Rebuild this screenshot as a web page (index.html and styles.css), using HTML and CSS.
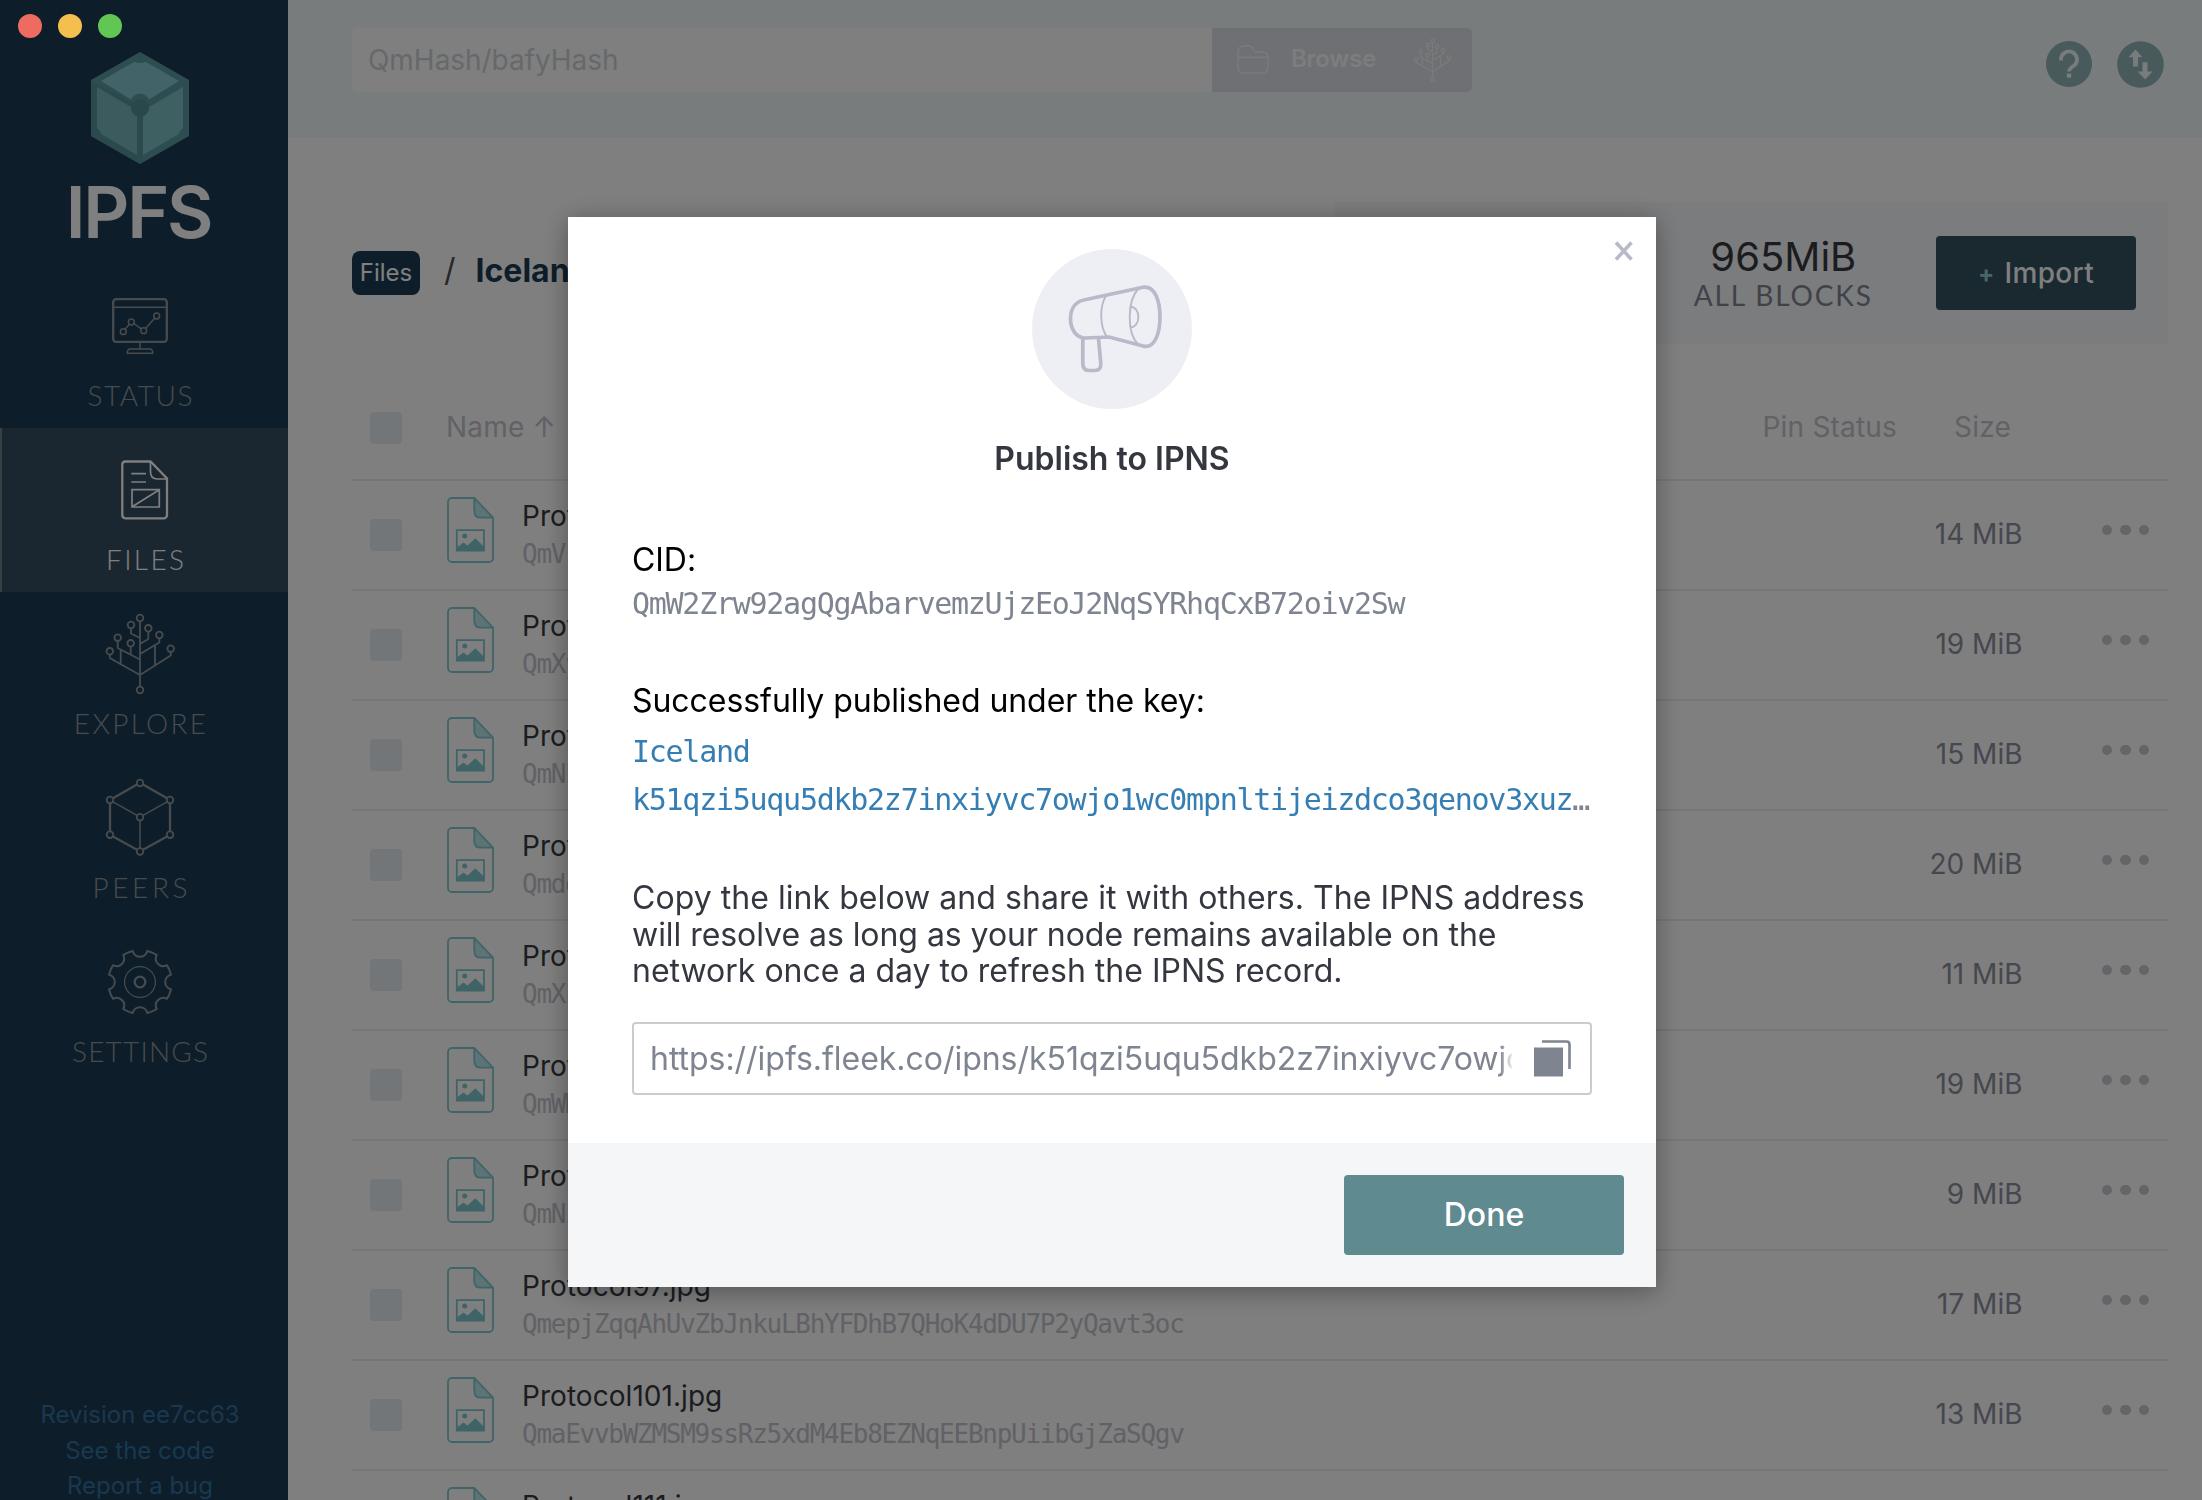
FILE: index.html
```html
<!DOCTYPE html>
<html lang="en">
<head>
<meta charset="utf-8">
<title>IPFS Files</title>
<link rel="stylesheet" href="styles.css">
</head>
<body>
<svg class="defs" width="0" height="0">
  <symbol id="tree" viewBox="0 0 68 80" overflow="visible">
    <path d="M34 7.5V72.5M25 14.5v5L34 24M42.3 17.5V25L34 30M53.3 24.500v4L34 40M64.700 38v3.500L34 61M11.700 27v7L34 45.500M24.700 32.600V41M3.800 40.600V44L34 61M14.700 36v15M49 31.500V51"/>
    <circle cx="34" cy="4" r="3.300"/><circle cx="25" cy="11" r="3.300"/><circle cx="42.300" cy="14.300" r="3.300"/><circle cx="53.300" cy="21" r="3.300"/><circle cx="64.700" cy="34.700" r="3.300"/><circle cx="11.700" cy="23.700" r="3.300"/><circle cx="24.700" cy="29.300" r="3.300"/><circle cx="3.800" cy="37.300" r="3.300"/><circle cx="34" cy="76" r="3.300"/>
  </symbol>
  <symbol id="doc" viewBox="0 0 47 66">
    <path d="M27.300 1l18.700 19.700h-12q-6.700 0-6.700-7z" fill="#bce6ec"/>
    <path d="M5 1H27.500L46 20.700V61a4 4 0 0 1-4 4H5a4 4 0 0 1-4-4V5a4 4 0 0 1 4-4zM27.300 1v12.700q0 7 6.700 7H46" fill="none" stroke="#7ecad0" stroke-width="1.800" stroke-linejoin="round"/>
    <path d="M9.800 33.200H37V53.500H9.800z" fill="none" stroke="#7ec8d0" stroke-width="1.800"/>
    <path d="M10 50.500l6.500-5 4 3 7.800-7.300 9 8.800v4H10z" fill="#7ec8d0"/><circle cx="17.700" cy="39" r="2.500" fill="#7ec8d0"/>
  </symbol>
</svg>

<div class="app">
  <nav class="sidebar">
    <div class="brand">
      <svg width="98" height="112" viewBox="0 0 98 112">
        <path d="M49 0l49 28v56l-49 28L0 84V28z" fill="#5a9aa0"/>
        <path d="M0 28l49 28 9 5-6 10v38l-3 3L0 84z" fill="#55929a" opacity=".6"/>
        <path d="M10 29L43 10q6 2 12 0l33 19-30 18.500a10 10 0 0 0-18 0z" fill="#84c8d0"/>
        <path d="M6 35l34 20a10 10 0 0 0 6 9v39L10 82q-1-4-4-6z" fill="#78b6bc"/>
        <path d="M92 35L58 55a10 10 0 0 1-6 9v39l36-21q1-4 4-6z" fill="#7cc0c4"/>
        <circle cx="49" cy="56" r="9" fill="#549096"/>
      </svg>
      <div class="wordmark">IPFS</div>
    </div>
    <a class="nav">
      <svg width="56" height="56" viewBox="0 0 56 56" stroke-width="1.500">
        <rect x="1.200" y="1.200" width="53.600" height="42.600" rx="3" stroke-width="2.300"/>
        <path d="M2 9.300H54M13 31.200l4.500-5M21.800 25.500l7.500 5.300M33.700 30.300l9-10M28 44v7M15.300 55.300q-.3-4.300 3.200-4.300h19q3.500 0 3.200 4.300z"/>
        <circle cx="11.300" cy="33.700" r="2.900"/><circle cx="19.300" cy="24" r="2.900"/><circle cx="31.700" cy="32.700" r="2.900"/><circle cx="44.700" cy="18" r="2.900"/>
      </svg>
      <span class="ls-status">STATUS</span>
    </a>
    <a class="nav active">
      <svg width="48" height="60" viewBox="0 0 48 60" stroke-width="1.700">
        <path d="M4.500 1.500H29.500L46 18.500V55a3.300 3.300 0 0 1-3.300 3.300H4.500A3.300 3.300 0 0 1 1.300 55V4.800A3.300 3.300 0 0 1 4.500 1.500z" stroke-width="2.300"/>
        <path d="M29.500 2v10q0 7 7 7H46M10.300 13.700H25M10.300 22H25M11 29.700H38.300V47H11zM11.500 46.500l26.500-16.500"/>
      </svg>
      <span class="ls-files">FILES</span>
    </a>
    <a class="nav">
      <svg width="68" height="80" stroke-width="1.800"><use href="#tree"/></svg>
      <span class="ls-explore">EXPLORE</span>
    </a>
    <a class="nav">
      <svg width="68" height="78" viewBox="0 0 68 78" stroke-width="1.500">
        <path d="M31 5.500L7 19.300M37 5.500L61 19.300M4 24.500v27.700M64 24.500v27.700M7 57.500L31 70.800M61 57.500L37 70.800" stroke-width="2.300"/>
        <path d="M7 22.800L31 36.400M61 22.800L37 36.400M34 41.500V69"/>
        <g stroke-width="1.800"><circle cx="34" cy="4" r="3.300"/><circle cx="64" cy="21" r="3.300"/><circle cx="64" cy="55.700" r="3.300"/><circle cx="34" cy="72.500" r="3.300"/><circle cx="4" cy="55.700" r="3.300"/><circle cx="4" cy="21" r="3.300"/><circle cx="34" cy="38.200" r="3.300"/></g>
      </svg>
      <span class="ls-peers">PEERS</span>
    </a>
    <a class="nav">
      <svg width="66" height="66" viewBox="-33 -33 66 66" stroke-width="2" stroke-linejoin="round">
        <path d="M7.300-31A31.800 31.800 0 0 1 16.800-27A7.500 7.500 0 0 0 27-16.800A31.800 31.800 0 0 1 31-7.300A7.500 7.500 0 0 0 31 7.300A31.800 31.800 0 0 1 27 16.800A7.500 7.500 0 0 0 16.800 27A31.800 31.800 0 0 1 7.300 31A7.500 7.500 0 0 0-7.300 31A31.800 31.800 0 0 1-16.800 27A7.500 7.500 0 0 0-27 16.800A31.800 31.800 0 0 1-31 7.300A7.500 7.500 0 0 0-31-7.300A31.800 31.800 0 0 1-27-16.800A7.500 7.500 0 0 0-16.800-27A31.800 31.800 0 0 1-7.300-31A7.500 7.500 0 0 0 7.300-31z"/>
        <circle r="15.400" stroke-width="1.200"/><circle r="5.300" stroke-width="2.300"/>
      </svg>
      <span class="ls-settings">SETTINGS</span>
    </a>
    <div class="about"><div>Revision ee7cc63</div><div>See the code</div><div>Report a bug</div></div>
  </nav>

  <div class="main">
    <header class="topbar">
      <div class="search"><div class="search-input">QmHash/bafyHash</div>
        <div class="browse">
          <svg width="33" height="30" viewBox="0 0 33 30" fill="none" stroke="#fff" opacity=".7" stroke-width="1.400"><path d="M1 7q0-6 6-6h5q2.500 0 4 3t3 3h6q6 0 6 5.500V22q0 6-6 6H7q-6 0-6-6zM1 12.300H31"/></svg>
          <b>Browse</b>
          <svg class="browse-tree" width="37" height="43" fill="none" stroke="#fff" opacity=".7" stroke-width="2.200"><use href="#tree"/></svg>
        </div>
      </div>
      <div class="tools">
        <svg width="46" height="46" viewBox="-23 -23 46 46"><circle r="23" fill="#90b4b8"/><path d="M-8-3.500v-1A8 8 0 1 1 6 .8Q0 4.500 0 7.500" fill="none" stroke="#f0f8fa" stroke-width="3.800"/><path d="M-2.200 9.500h4.400v4.200h-4.400z" fill="#f0f8fa"/></svg>
        <svg width="47" height="47" viewBox="-23.500 -23.500 47 47"><circle r="23.300" fill="#90b4b8"/><path d="M-5-15l7 7.700h-4.500V2h-5V-7.300H-12zM4.700 15l-7.700-8h5V-2.300h5V7h5z" fill="#f0f8fa"/></svg>
      </div>
    </header>

    <div class="content">
      <div class="heading">
        <div class="crumbs"><span class="chip">Files</span><span class="slash">/</span><b>Iceland</b></div>
        <div class="stats">
          <div class="stat"><div class="value">965MiB</div><div class="label">ALL BLOCKS</div></div>
          <div class="import"><i>+</i><span>Import</span></div>
        </div>
      </div>
      <div class="thead"><span class="check"></span><span class="col-name">Name <i>↑</i></span><span class="col-pin">Pin Status</span><span class="col-size">Size</span></div>
      <div class="row"><span class="check"></span><svg class="doc"><use href="#doc"/></svg><div class="file"><div>Protocol12.jpg</div><code>QmVr</code></div><span class="size">14 MiB</span><span class="dots"><i></i><i></i><i></i></span></div>
      <div class="row"><span class="check"></span><svg class="doc"><use href="#doc"/></svg><div class="file"><div>Protocol24.jpg</div><code>QmXy</code></div><span class="size">19 MiB</span><span class="dots"><i></i><i></i><i></i></span></div>
      <div class="row"><span class="check"></span><svg class="doc"><use href="#doc"/></svg><div class="file"><div>Protocol33.jpg</div><code>QmNL</code></div><span class="size">15 MiB</span><span class="dots"><i></i><i></i><i></i></span></div>
      <div class="row"><span class="check"></span><svg class="doc"><use href="#doc"/></svg><div class="file"><div>Protocol41.jpg</div><code>Qmdd</code></div><span class="size">20 MiB</span><span class="dots"><i></i><i></i><i></i></span></div>
      <div class="row"><span class="check"></span><svg class="doc"><use href="#doc"/></svg><div class="file"><div>Protocol58.jpg</div><code>QmXL</code></div><span class="size">11 MiB</span><span class="dots"><i></i><i></i><i></i></span></div>
      <div class="row"><span class="check"></span><svg class="doc"><use href="#doc"/></svg><div class="file"><div>Protocol67.jpg</div><code>QmWM</code></div><span class="size">19 MiB</span><span class="dots"><i></i><i></i><i></i></span></div>
      <div class="row"><span class="check"></span><svg class="doc"><use href="#doc"/></svg><div class="file"><div>Protocol85.jpg</div><code>QmNz</code></div><span class="size">9 MiB</span><span class="dots"><i></i><i></i><i></i></span></div>
      <div class="row"><span class="check"></span><svg class="doc"><use href="#doc"/></svg><div class="file"><div>Protocol97.jpg</div><code>QmepjZqqAhUvZbJnkuLBhYFDhB7QHoK4dDU7P2yQavt3oc</code></div><span class="size">17 MiB</span><span class="dots"><i></i><i></i><i></i></span></div>
      <div class="row"><span class="check"></span><svg class="doc"><use href="#doc"/></svg><div class="file"><div>Protocol101.jpg</div><code>QmaEvvbWZMSM9ssRz5xdM4Eb8EZNqEEBnpUiibGjZaSQgv</code></div><span class="size">13 MiB</span><span class="dots"><i></i><i></i><i></i></span></div>
      <div class="row"><span class="check"></span><svg class="doc"><use href="#doc"/></svg><div class="file"><div>Protocol111.jpg</div></div></div>
    </div>
  </div>
</div>

<div class="overlay">
  <div class="modal">
    <svg class="close" width="20" height="20" viewBox="0 0 20 20"><path d="M2 1.500l15.500 17M17.500 1.500L2 18.500" stroke="#b7bbc8" stroke-width="3.600"/></svg>
    <div class="modal-body">
      <svg class="badge" width="160" height="160" viewBox="0 0 160 160" fill="none" stroke="#b9bac9">
        <circle cx="80" cy="80" r="80" fill="#eeeff4" stroke="none"/>
        <path d="M54 50.500L111 38.200C123 36.500 128 52 128 68C128 84 123 99 112 97.300L77 88L53 89C44 89 38.500 80 38.500 69.500C38.500 59 44 52 54 50.500z" stroke-width="3.700"/>
        <path d="M50.800 89V114q0 7.500 6 7.500h6q6.500 0 6-7L66.400 88.500" stroke-width="3.700"/>
        <path d="M73.800 47C67.500 58 67.500 77 75 88M106.500 39.500C95 52 94.500 84 106.500 96M98.500 57.700C109 58 109 78 98.500 78.300" stroke-width="1.900"/>
      </svg>
      <h2>Publish to IPNS</h2>
      <div class="black">CID:</div>
      <code class="cid">QmW2Zrw92agQgAbarvemzUjzEoJ2NqSYRhqCxB72oiv2Sw</code>
      <div class="black published">Successfully published under the key:</div>
      <code class="key">Iceland</code>
      <code class="key"><span>k51qzi5uqu5dkb2z7inxiyvc7owjo1wc0mpnltijeizdco3qenov3xuz</span><em>…</em></code>
      <p>Copy the link below and share it with others. The IPNS address<br><span class="tight">will resolve as long as your node remains available on the</span><br><span class="snug">network once a day to refresh the IPNS record.</span></p>
      <div class="link"><div class="url">https://ipfs.fleek.co/ipns/k51qzi5uqu5dkb2z7inxiyvc7owjo1wc0mpnltijeizdco3qenov3xuz</div>
        <svg width="37" height="37" viewBox="0 0 37 37"><path d="M0 7.500H29V36.500H0z" fill="#7f8491"/><path d="M8 1.500H32.500Q35.500 1.500 35.500 4.500V29" fill="none" stroke="#7f8491" stroke-width="2.600"/></svg>
      </div>
    </div>
    <div class="modal-foot"><div class="done">Done</div></div>
  </div>
</div>
<div class="lights"><i class="red"></i><i class="yellow"></i><i class="green"></i></div>
</body>
</html>
```

FILE: styles.css
```css
* { box-sizing: border-box; }
html, body { margin: 0; height: 100%; overflow: hidden; }
body { font-family: Inter, sans-serif; color: #36393e; background: #fff; }
i, em { font-style: normal; }
svg { display: block; flex: none; }
.defs { position: absolute; }
code { font-family: "DejaVu Sans Mono", monospace; }

.app { display: flex; height: 1500px; overflow: hidden; }

/* sidebar */
.sidebar { flex: none; width: 288px; height: 1500px; background: #1a3c54; display: flex; flex-direction: column; overflow: hidden; }
.brand { flex: none; height: 264px; padding: 52px 8px 0 0; display: flex; flex-direction: column; align-items: center; }
.wordmark { font-size: 71.5px; font-weight: 600; line-height: 80px; letter-spacing: -2.2px; margin: 8px 3px 0 0; color: #fff; }
.nav { flex: none; height: 164px; padding: 6px 8px 16px 0; display: flex; flex-direction: column; align-items: center; color: #8e979c; }
.nav svg { fill: none; stroke: #8e979c; margin: auto 0; overflow: visible; position: relative; top: 2px; }
.nav span { font-family: Lato, sans-serif; font-weight: 300; font-size: 28px; line-height: 34px; }
.nav.active { background: #344e60; border-left: 2px solid #728088; padding-right: 0; color: #fff; }
.nav.active svg { stroke: #fff; }
.nav .ls-status { letter-spacing: 1.56px; margin-right: -1.56px; }
.nav .ls-files { letter-spacing: 2.37px; margin-right: -2.37px; }
.nav .ls-explore { letter-spacing: 2.34px; margin-right: -2.34px; }
.nav .ls-peers { letter-spacing: 3.59px; margin-right: -3.59px; }
.nav .ls-settings { letter-spacing: 1.19px; margin-right: -1.19px; }
.about { margin-top: 313px; padding-right: 8px; text-align: center; font-size: 24px; line-height: 35.6px; color: #32709f; }

/* top bar */
.main { flex: 1; min-width: 0; }
.topbar { height: 138px; background: #f0f8fa; padding: 28px 38px 0 64px; display: flex; justify-content: space-between; }
.search { display: flex; height: 64px; width: 1120px; border-radius: 5px; overflow: hidden; }
.search-input { flex: 1; background: #fff; padding-left: 16px; font-size: 28px; line-height: 64px; letter-spacing: -.04px; color: #ccd2d8; }
.browse { width: 260px; background: #dfe0e7; display: flex; align-items: center; padding: 0 21px 0 25px; color: #f9fcfc; font-size: 24px; line-height: 62px; }
.browse b { font-weight: 600; letter-spacing: -.25px; margin: -2px 0 0 21px; }
.browse-tree { margin-left: auto; }
.tools { display: flex; gap: 25px; height: 60px; padding-top: 12px; align-items: center; }

/* heading */
.content { padding: 64px 34px 0 64px; }
.heading { display: flex; justify-content: space-between; height: 142px; }
.crumbs { display: flex; height: 44px; margin-top: 49px; align-items: center; }
.chip { width: 68px; height: 44px; border-radius: 8px; background: #1a3c54; color: #fff; font-size: 24px; line-height: 43px; text-align: center; }
.slash { font-size: 32px; color: #525052; margin: -6px 21px 0 24px; line-height: 40px; }
.crumbs b { font-size: 32px; font-weight: 700; line-height: 38px; color: #1a3c54; margin: -4px 0 0 -1px; }
.stats { width: 833px; background: #f7f8fa; display: flex; justify-content: flex-end; padding: 34px 32px 0 0; }
.stat { text-align: center; margin-right: 65px; }
.value { font-size: 40px; line-height: 42px; padding-left: 2px; color: #36393e; }
.label { font-family: Lato, sans-serif; font-size: 28px; line-height: 34px; letter-spacing: 1.88px; margin-right: -1.88px; color: #7f8491; }
.import { width: 200px; height: 74px; border-radius: 4px; background: #345060; color: #fff; display: flex; justify-content: center; align-items: center; gap: 10px; font-size: 28px; font-weight: 500; letter-spacing: .3px; }
.import i { font-size: 24px; font-weight: 700; color: #8ccdd2; }

/* table */
.thead { display: flex; align-items: center; height: 137px; padding: 33px 0 0 18px; border-bottom: 2px solid #ecedf0; font-size: 28px; color: #c2c3cc; letter-spacing: .2px; }
.thead .check, .row .check { flex: none; width: 32px; height: 32px; border-radius: 4px; background: #e6edf2; }
.col-name, .col-pin, .col-size { margin-top: -2px; }
.col-name { margin-left: 44px; flex: 1; }
.col-pin { margin-right: 57px; }
.col-size { margin-right: 157px; }
.row { display: flex; align-items: center; height: 110px; border-bottom: 2px solid #ecedf0; padding: 0 18px; }
.doc { width: 47px; height: 66px; margin: -10px 0 0 44.5px; }
.file { flex: 1; margin-left: 28.500px; align-self: flex-start; padding-top: 18px; font-size: 28px; line-height: 34px; letter-spacing: .05px; color: #36393e; }
.file code { display: block; margin-top: 4px; font-size: 26px; line-height: 34px; letter-spacing: -1.27px; color: #c2c3cc; }
.size { width: 200px; text-align: right; font-size: 28px; letter-spacing: 0; color: #8b909c; margin: -2px 79px 0 0; }
.dots { display: flex; gap: 8px; margin: -10px 1px 0 0; }
.dots i { width: 10.500px; height: 10.500px; border-radius: 50%; background: #c8c9d2; }

/* modal */
.overlay { position: fixed; inset: 0; background: rgba(0, 0, 0, .5); display: flex; justify-content: center; align-items: flex-start; padding: 217px 0 0 22px; }
.modal { position: relative; width: 1088px; height: 1070px; background: #fff; box-shadow: 0 4px 24px rgba(0, 0, 0, .35); display: flex; flex-direction: column; }
.close { position: absolute; right: 22px; top: 24px; }
.modal-body { flex: 1; padding: 32px 64px 0; }
.badge { margin: 0 auto; }
h2 { margin: 30px 0 0; font-size: 32px; font-weight: 600; line-height: 40px; text-align: center; color: #34373f; }
.black { color: #000; font-size: 32px; line-height: 36px; letter-spacing: -.05px; margin-top: 63px; }
.modal code { display: block; font-size: 30px; letter-spacing: -1.27px; line-height: 48px; white-space: nowrap; }
.modal .cid { line-height: 36px; margin-top: 8px; color: #7f8491; }
.published { margin-top: 61px; }
.published + .key { margin-top: 9px; }
.key { color: #357eb3; }
.key em { color: #7f8491; }
p { margin: 56px 0 32px; font-size: 32px; line-height: 36.700px; letter-spacing: .05px; color: #34373f; white-space: nowrap; }
.tight { letter-spacing: -.05px; }
.snug { letter-spacing: 0; }
.link { height: 73px; border: 2px solid #ccc; border-radius: 4px; display: flex; align-items: center; justify-content: space-between; padding: 0 19px 0 16px; }
.url { width: 862px; overflow: hidden; white-space: nowrap; font-size: 32px; line-height: 67px; letter-spacing: -.03px; color: #7f8491; -webkit-mask-image: linear-gradient(to right, #000 850px, transparent 864px); mask-image: linear-gradient(to right, #000 850px, transparent 864px); }
.modal-foot { height: 144px; background: #f4f6f8; display: flex; justify-content: flex-end; padding: 32px 32px 0 0; }
.done { width: 280px; height: 80px; border-radius: 4px; background: #5e8a90; color: #fff; font-size: 32px; font-weight: 500; line-height: 79px; text-align: center; }

.lights { position: fixed; left: 18px; top: 14px; display: flex; gap: 16px; }
.lights i { width: 24px; height: 24px; border-radius: 50%; }
.red { background: #ed6b5f; }
.yellow { background: #f5bf4f; }
.green { background: #62c655; }
```
